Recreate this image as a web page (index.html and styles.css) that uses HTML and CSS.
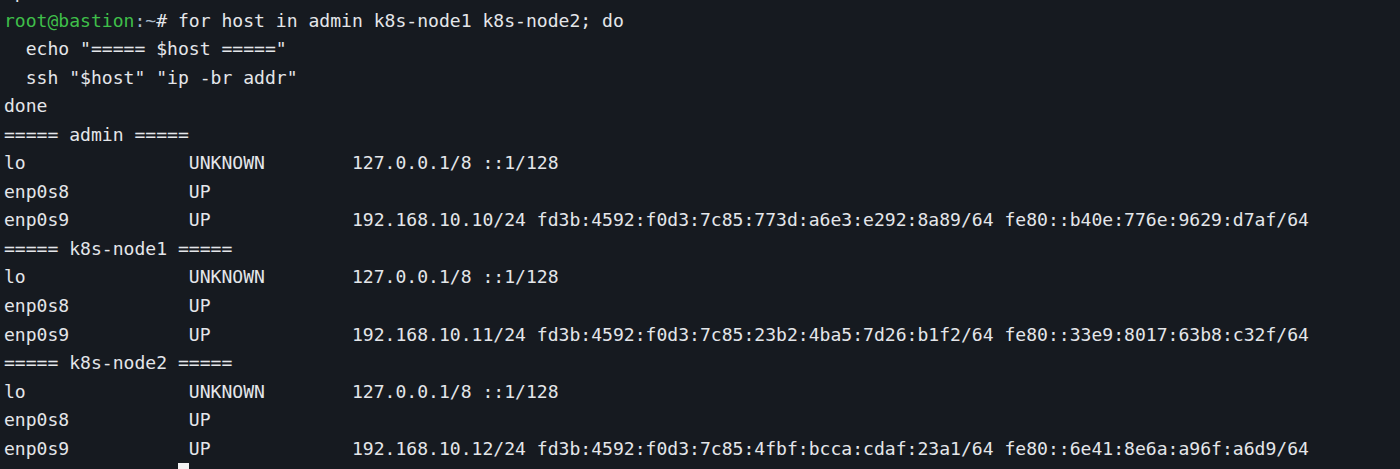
FILE: index.html
```html
<!DOCTYPE html>
<html lang="en">
<head>
<meta charset="utf-8">
<title>Terminal</title>
<link rel="stylesheet" href="styles.css">
</head>
<body>
<div class="term">
<div class="line"> p                               ,                                               ,                     ,</div>
<div class="line"><span class="user">root@bastion</span><span class="path">:~</span># for host in admin k8s-node1 k8s-node2; do</div>
<div class="line">  echo "===== $host ====="</div>
<div class="line">  ssh "$host" "ip -br addr"</div>
<div class="line">done</div>
<div class="line">===== admin =====</div>
<div class="line">lo               UNKNOWN        127.0.0.1/8 ::1/128</div>
<div class="line">enp0s8           UP</div>
<div class="line">enp0s9           UP             192.168.10.10/24 fd3b:4592:f0d3:7c85:773d:a6e3:e292:8a89/64 fe80::b40e:776e:9629:d7af/64</div>
<div class="line">===== k8s-node1 =====</div>
<div class="line">lo               UNKNOWN        127.0.0.1/8 ::1/128</div>
<div class="line">enp0s8           UP</div>
<div class="line">enp0s9           UP             192.168.10.11/24 fd3b:4592:f0d3:7c85:23b2:4ba5:7d26:b1f2/64 fe80::33e9:8017:63b8:c32f/64</div>
<div class="line">===== k8s-node2 =====</div>
<div class="line">lo               UNKNOWN        127.0.0.1/8 ::1/128</div>
<div class="line">enp0s8           UP</div>
<div class="line">enp0s9           UP             192.168.10.12/24 fd3b:4592:f0d3:7c85:4fbf:bcca:cdaf:23a1/64 fe80::6e41:8e6a:a96f:a6d9/64</div>
<div class="line">                <span class="cursor"> </span></div>
</div>
</body>
</html>
```

FILE: styles.css
```css
html, body {
  margin: 0;
  padding: 0;
  background: #161a20;
  height: 100%;
  overflow: hidden;
}

.term {
  margin: -22px 0 0 0;
  padding: 0 0 0 4px;
  font-family: "DejaVu Sans Mono", "Liberation Mono", monospace;
  font-size: 18.07px;
  line-height: 28.55px;
  color: #e4e6ea;
}

.line {
  white-space: pre;
  height: 28.55px;
}

.user {
  color: #3fbf4a;
}

.path {
  color: #a8b8c8;
}

.cursor {
  display: inline-block;
  width: 11px;
  height: 28.55px;
  vertical-align: top;
  background: #f2f2f2;
}
```
